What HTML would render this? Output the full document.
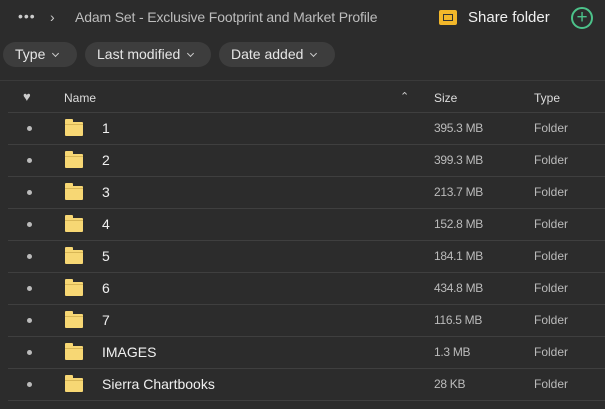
<!DOCTYPE html><html style="overflow:hidden;height:409px"><head><style>
body{margin:0;width:605px;height:409px;background:#2c2c2c;font-family:"Liberation Sans",sans-serif;color:#ddd;overflow:hidden;position:relative}
.a{position:absolute;white-space:nowrap}
.pill{position:absolute;top:42px;height:25px;border-radius:13px;background:#3d3d3d;color:#e6e6e6;font-size:14px;line-height:25px;padding-left:12px;box-sizing:border-box}
.chev{display:inline-block;width:4px;height:4px;border-right:1.5px solid #ccc;border-bottom:1.5px solid #ccc;transform:rotate(45deg);margin-left:8px;position:relative;top:-3px}
.row{position:absolute;left:8px;width:597px;height:31px;border-top:1px solid #3f3f3f}
.dot{position:absolute;left:19px;top:13px;width:5px;height:5px;border-radius:3px;background:#bbb}
.fold{position:absolute;left:57px;top:9px;width:18px;height:14px;background:#f7d774;border-radius:1px}
.fold:before{content:"";position:absolute;left:0;top:-3px;width:8px;height:4px;background:#f7d774;border-radius:1px 1px 0 0}
.fold:after{content:"";position:absolute;left:0;top:2px;width:18px;height:1px;background:#d8b656}
.nm{position:absolute;left:94px;top:7px;font-size:14px;color:#f0f0f0}
.sz{position:absolute;left:426px;top:8px;font-size:12px;color:#bbb;letter-spacing:-0.3px}
.tp{position:absolute;left:526px;top:8px;font-size:12px;color:#bbb}
</style></head><body>
<div class="a" style="left:18px;top:8px;font-size:14px;color:#ccc;letter-spacing:1px">•••</div>
<div class="a" style="left:50px;top:9px;font-size:14px;color:#ccc">›</div>
<div class="a" style="left:75px;top:9px;font-size:14px;color:#bdbdbd;letter-spacing:-0.15px">Adam Set - Exclusive Footprint and Market Profile</div>
<div class="a" style="left:439px;top:10px;width:18px;height:15px;background:#f2b72a;border-radius:2px"><div style="position:absolute;left:4px;top:4px;width:10px;height:7px;border:1px solid #333;box-sizing:border-box"></div></div>
<div class="a" style="left:468px;top:9px;font-size:15px;color:#f0f0f0">Share folder</div>
<div class="a" style="left:571px;top:7px;width:18px;height:18px;border:2px solid #4cc28a;border-radius:50%;color:#4cc28a;font-size:19px;line-height:17px;text-align:center">+</div>
<div class="pill" style="left:3px;width:74px">Type<span class="chev"></span></div>
<div class="pill" style="left:85px;width:126px">Last modified<span class="chev"></span></div>
<div class="pill" style="left:219px;width:116px">Date added<span class="chev"></span></div>
<div class="a" style="left:0;top:80px;width:605px;border-top:1px solid #3a3a3a"></div>
<div class="a" style="left:23px;top:89px;font-size:13px;color:#ccc">♥</div>
<div class="a" style="left:64px;top:91px;font-size:12px;color:#ddd">Name</div>
<div class="a" style="left:400px;top:90px;font-size:11px;color:#ccc">⌃</div>
<div class="a" style="left:434px;top:91px;font-size:12px;color:#ddd">Size</div>
<div class="a" style="left:534px;top:91px;font-size:12px;color:#ddd">Type</div>
<div class="row" style="top:112px"><div class="dot"></div><div class="fold"></div><div class="nm">1</div><div class="sz">395.3 MB</div><div class="tp">Folder</div></div>
<div class="row" style="top:144px"><div class="dot"></div><div class="fold"></div><div class="nm">2</div><div class="sz">399.3 MB</div><div class="tp">Folder</div></div>
<div class="row" style="top:176px"><div class="dot"></div><div class="fold"></div><div class="nm">3</div><div class="sz">213.7 MB</div><div class="tp">Folder</div></div>
<div class="row" style="top:208px"><div class="dot"></div><div class="fold"></div><div class="nm">4</div><div class="sz">152.8 MB</div><div class="tp">Folder</div></div>
<div class="row" style="top:240px"><div class="dot"></div><div class="fold"></div><div class="nm">5</div><div class="sz">184.1 MB</div><div class="tp">Folder</div></div>
<div class="row" style="top:272px"><div class="dot"></div><div class="fold"></div><div class="nm">6</div><div class="sz">434.8 MB</div><div class="tp">Folder</div></div>
<div class="row" style="top:304px"><div class="dot"></div><div class="fold"></div><div class="nm">7</div><div class="sz">116.5 MB</div><div class="tp">Folder</div></div>
<div class="row" style="top:336px"><div class="dot"></div><div class="fold"></div><div class="nm">IMAGES</div><div class="sz">1.3 MB</div><div class="tp">Folder</div></div>
<div class="row" style="top:368px"><div class="dot"></div><div class="fold"></div><div class="nm">Sierra Chartbooks</div><div class="sz">28 KB</div><div class="tp">Folder</div></div>
<div class="a" style="left:8px;top:400px;width:597px;border-top:1px solid #3f3f3f"></div>
</body></html>
